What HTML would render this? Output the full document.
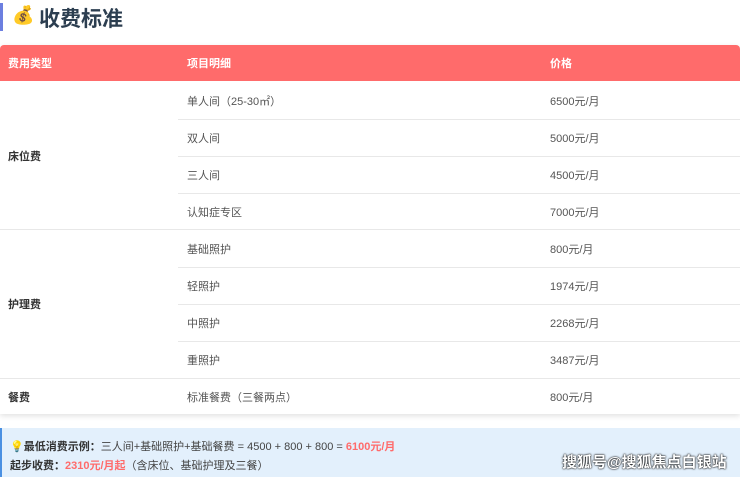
<!DOCTYPE html><html><head><meta charset="utf-8"><style>
body{margin:0;width:740px;height:477px;background:#fff;font-family:"Liberation Sans","Noto Sans CJK SC",sans-serif;position:relative;overflow:hidden;color:#555}
.a{position:absolute}
.t{font-size:11px;white-space:nowrap}
.hl{position:absolute;height:1px;background:#e8e8e8}
</style></head><body>
<div class="a" style="left:0;top:3px;width:3px;height:28px;background:#6c7fe0"></div>
<div class="a" style="left:12px;top:5px;font-size:18px">💰</div>
<div class="a" style="left:39px;top:3px;font-size:21px;font-weight:bold;color:#2c3e50">收费标准</div>
<div class="a" style="left:0;top:45px;width:740px;height:369px;box-shadow:0 2px 6px rgba(0,0,0,.12);border-radius:4px 4px 0 0"></div>
<div class="a" style="left:0;top:45px;width:740px;height:36px;background:#ff6b6b;border-radius:4px 4px 0 0"></div>
<div class="a t" style="left:8px;top:55px;color:#fff;font-weight:bold">费用类型</div>
<div class="a t" style="left:187px;top:55px;color:#fff;font-weight:bold">项目明细</div>
<div class="a t" style="left:550px;top:55px;color:#fff;font-weight:bold">价格</div>
<div class="hl" style="left:178px;top:119px;width:562px"></div>
<div class="hl" style="left:178px;top:156px;width:562px"></div>
<div class="hl" style="left:178px;top:193px;width:562px"></div>
<div class="hl" style="left:0;top:229px;width:740px"></div>
<div class="hl" style="left:178px;top:267px;width:562px"></div>
<div class="hl" style="left:178px;top:304px;width:562px"></div>
<div class="hl" style="left:178px;top:341px;width:562px"></div>
<div class="hl" style="left:0;top:378px;width:740px"></div>
<div class="a t" style="left:8px;top:148px;font-weight:bold;color:#333">床位费</div>
<div class="a t" style="left:8px;top:296px;font-weight:bold;color:#333">护理费</div>
<div class="a t" style="left:8px;top:389px;font-weight:bold;color:#333">餐费</div>
<div class="a t" style="left:187px;top:93px">单人间（25-30㎡）</div><div class="a t" style="left:550px;top:93px">6500元/月</div>
<div class="a t" style="left:187px;top:130px">双人间</div><div class="a t" style="left:550px;top:130px">5000元/月</div>
<div class="a t" style="left:187px;top:167px">三人间</div><div class="a t" style="left:550px;top:167px">4500元/月</div>
<div class="a t" style="left:187px;top:204px">认知症专区</div><div class="a t" style="left:550px;top:204px">7000元/月</div>
<div class="a t" style="left:187px;top:241px">基础照护</div><div class="a t" style="left:550px;top:241px">800元/月</div>
<div class="a t" style="left:187px;top:278px">轻照护</div><div class="a t" style="left:550px;top:278px">1974元/月</div>
<div class="a t" style="left:187px;top:315px">中照护</div><div class="a t" style="left:550px;top:315px">2268元/月</div>
<div class="a t" style="left:187px;top:352px">重照护</div><div class="a t" style="left:550px;top:352px">3487元/月</div>
<div class="a t" style="left:187px;top:389px">标准餐费（三餐两点）</div><div class="a t" style="left:550px;top:389px">800元/月</div>
<div class="a" style="left:0;top:428px;width:740px;height:49px;background:#e3f0fc;border-left:2px solid #4a90e2"></div>
<div class="a t" style="left:10px;top:438px;color:#444">💡<b style="color:#333">最低消费示例：</b>三人间+基础照护+基础餐费 = 4500 + 800 + 800 = <b style="color:#ff6b6b">6100元/月</b></div>
<div class="a t" style="left:10px;top:457px;color:#444"><b style="color:#333">起步收费：</b><b style="color:#ff6b6b">2310元/月起</b>（含床位、基础护理及三餐）</div>
<div class="a" style="left:562px;top:451px;font-size:15px;color:#fff;font-weight:bold;text-shadow:0 0 2px #000,0 0 1px #000">搜狐号@搜狐焦点白银站</div>
</body></html>
